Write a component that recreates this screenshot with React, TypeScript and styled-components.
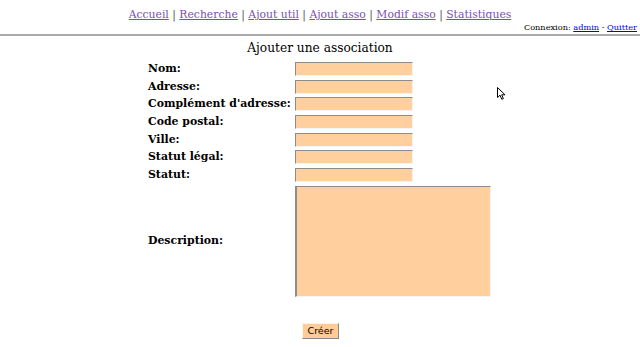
import React from 'react'
import styled, { createGlobalStyle } from 'styled-components'

const GlobalStyle = createGlobalStyle`
  html, body {
    margin: 0;
    padding: 0;
    background: #fff;
    font-family: "DejaVu Serif", serif;
    color: #000;
  }
`

const Page = styled.div`
  position: relative;
  width: 640px;
  height: 347px;
  overflow: hidden;
`
const Header = styled.div`
  display: flex;
  flex-direction: column;
  border-bottom: 2px solid #ababab;
`
const Nav = styled.nav`
  text-align: center;
  font-size: 10.8px;
  line-height: 14px;
  padding-top: 8px;
  color: #555;
`
const NavLink = styled.a`
  color: #7a4fae;
  text-decoration: underline;
`
const Login = styled.div`
  text-align: right;
  font-size: 8.2px;
  line-height: 11px;
  padding: 0 3px 1px 0;
`
const UserLink = styled.a`
  color: #0000ee;
  text-decoration: underline;
`
const Title = styled.h1`
  margin: 4px 0 0;
  text-align: center;
  font-size: 12.2px;
  font-weight: normal;
  line-height: 16px;
`
const Form = styled.form`
  display: flex;
  flex-direction: column;
  align-items: center;
`
const Fields = styled.div`
  display: grid;
  grid-template-columns: 147px 196px;
  row-gap: 3.7px;
  align-items: center;
  margin-top: 6px;
  margin-left: -1px;
`
const Label = styled.label`
  font-weight: bold;
  font-size: 10.9px;
  line-height: 14px;
  white-space: nowrap;
`
const Field = styled.div<{ $wide?: boolean }>`
  box-sizing: border-box;
  width: ${p => (p.$wide ? '196px' : '118px')};
  height: ${p => (p.$wide ? '111px' : '14px')};
  background: #ffcf9e;
  border-top: 1px solid #8c8c8c;
  border-left: ${p => (p.$wide ? '2px' : '1px')} solid #8c8c8c;
  border-right: 1px solid #f4f4f4;
  border-bottom: 1px solid #f4f4f4;
`
const Button = styled.button`
  margin-top: 26px;
  margin-left: 1px;
  box-sizing: border-box;
  width: 37px;
  height: 16px;
  padding: 0;
  background: #ffcc99;
  border-top: 1px solid #fff3e6;
  border-left: 1px solid #fff3e6;
  border-right: 1px solid #888;
  border-bottom: 1px solid #888;
  font-family: "DejaVu Sans", sans-serif;
  font-size: 9.5px;
  color: #000;
`
const Cursor = styled.svg`
  position: absolute;
  left: 497px;
  top: 87px;
`

const links = ['Accueil', 'Recherche', 'Ajout util', 'Ajout asso', 'Modif asso', 'Statistiques']
const fields = ['Nom:', 'Adresse:', "Complément d'adresse:", 'Code postal:', 'Ville:', 'Statut légal:', 'Statut:']

const App: React.FC = () => (
  <Page>
    <GlobalStyle />
    <Header>
      <Nav>
        {links.map((l, i) => (
          <React.Fragment key={l}>
            {i > 0 && ' | '}
            <NavLink href="#">{l}</NavLink>
          </React.Fragment>
        ))}
      </Nav>
      <Login>
        Connexion: <UserLink href="#">admin</UserLink> - <UserLink href="#">Quitter</UserLink>
      </Login>
    </Header>
    <Title>Ajouter une association</Title>
    <Form>
      <Fields>
        {fields.map(f => (
          <React.Fragment key={f}>
            <Label>{f}</Label>
            <Field />
          </React.Fragment>
        ))}
        <Label>Description:</Label>
        <Field $wide />
      </Fields>
      <Button type="button">Créer</Button>
    </Form>
    <Cursor width="10" height="14" viewBox="0 0 10 14">
      <path d="M0.5 0.5 L0.5 10.5 L3 8.2 L4.8 12.3 L6.4 11.6 L4.7 7.8 L8 7.8 Z" fill="#fff" stroke="#000" strokeWidth="1" />
    </Cursor>
  </Page>
)

export default App
